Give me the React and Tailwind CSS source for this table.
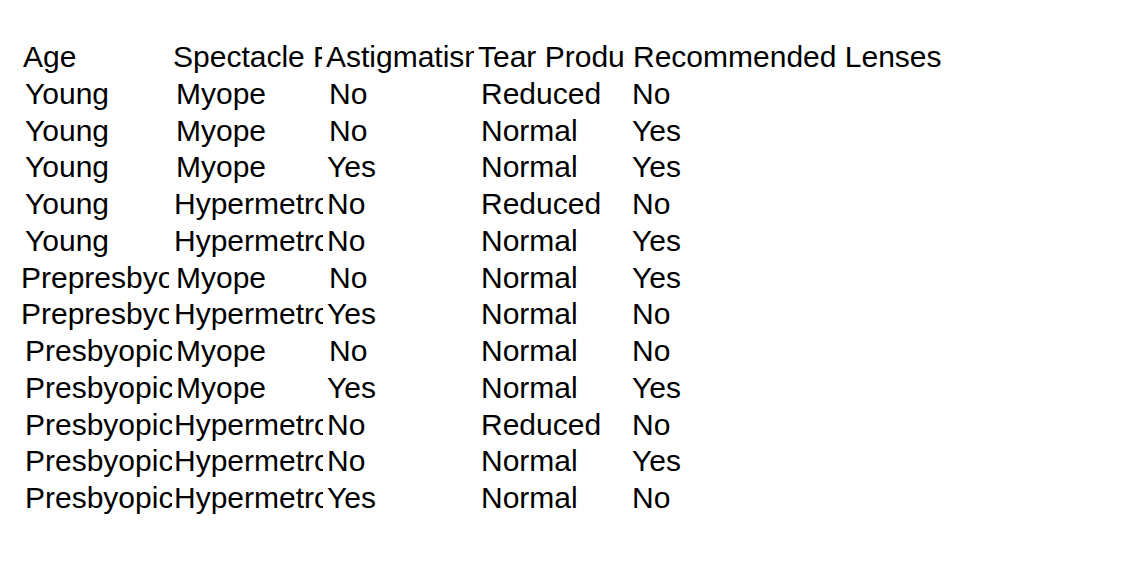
import React from "react";

const header = ["Age", "Spectacle Prescription", "Astigmatism", "Tear Production Rate", "Recommended Lenses"];
const rows = [
  ["Young", "Myope", "No", "Reduced", "No"],
  ["Young", "Myope", "No", "Normal", "Yes"],
  ["Young", "Myope", "Yes", "Normal", "Yes"],
  ["Young", "Hypermetrope", "No", "Reduced", "No"],
  ["Young", "Hypermetrope", "No", "Normal", "Yes"],
  ["Prepresbyopic", "Myope", "No", "Normal", "Yes"],
  ["Prepresbyopic", "Hypermetrope", "Yes", "Normal", "No"],
  ["Presbyopic", "Myope", "No", "Normal", "No"],
  ["Presbyopic", "Myope", "Yes", "Normal", "Yes"],
  ["Presbyopic", "Hypermetrope", "No", "Reduced", "No"],
  ["Presbyopic", "Hypermetrope", "No", "Normal", "Yes"],
  ["Presbyopic", "Hypermetrope", "Yes", "Normal", "No"],
];

function padFor(text, col, isHeader, prev) {
  if (isHeader) {
    if (col === 0) return "pl-[3px]";
    if (col === 4) return "pl-[4px]";
    return "pl-[1px] mr-[3px]";
  }
  if (col === 0) {
    if (text === "Prepresbyopic") return "pl-[1px] mr-[3px]";
    return "pl-[5px]";
  }
  if (col === 1) {
    if (text === "Hypermetrope") return "pl-[2px] mr-[2px]";
    return "pl-[4px]";
  }
  if (col === 2) {
    if (prev === "Hypermetrope" || text === "Yes") return "pl-[2px]";
    return "pl-[4px]";
  }
  if (col === 4) return "pl-[3px]";
  return "pl-[4px]";
}

function Row({ cells, isHeader }) {
  return (
    <div className="grid grid-cols-[152px_153px_152px_152px_400px] h-[36.75px] items-center">
      {cells.map((c, i) => (
        <div
          key={i}
          className={
            "overflow-hidden whitespace-nowrap leading-[36.75px] " +
            padFor(c, i, isHeader, i > 0 ? cells[i - 1] : null)
          }
        >
          {c}
        </div>
      ))}
    </div>
  );
}

export default function App() {
  return (
    <div
      className="w-[1148px] h-[562px] bg-white text-black text-[30px] pt-[39px] pl-[20px]"
      style={{ fontFamily: '"Liberation Sans", Arial, sans-serif' }}
    >
      <Row cells={header} isHeader />
      {rows.map((r, i) => (
        <Row key={i} cells={r} />
      ))}
    </div>
  );
}
